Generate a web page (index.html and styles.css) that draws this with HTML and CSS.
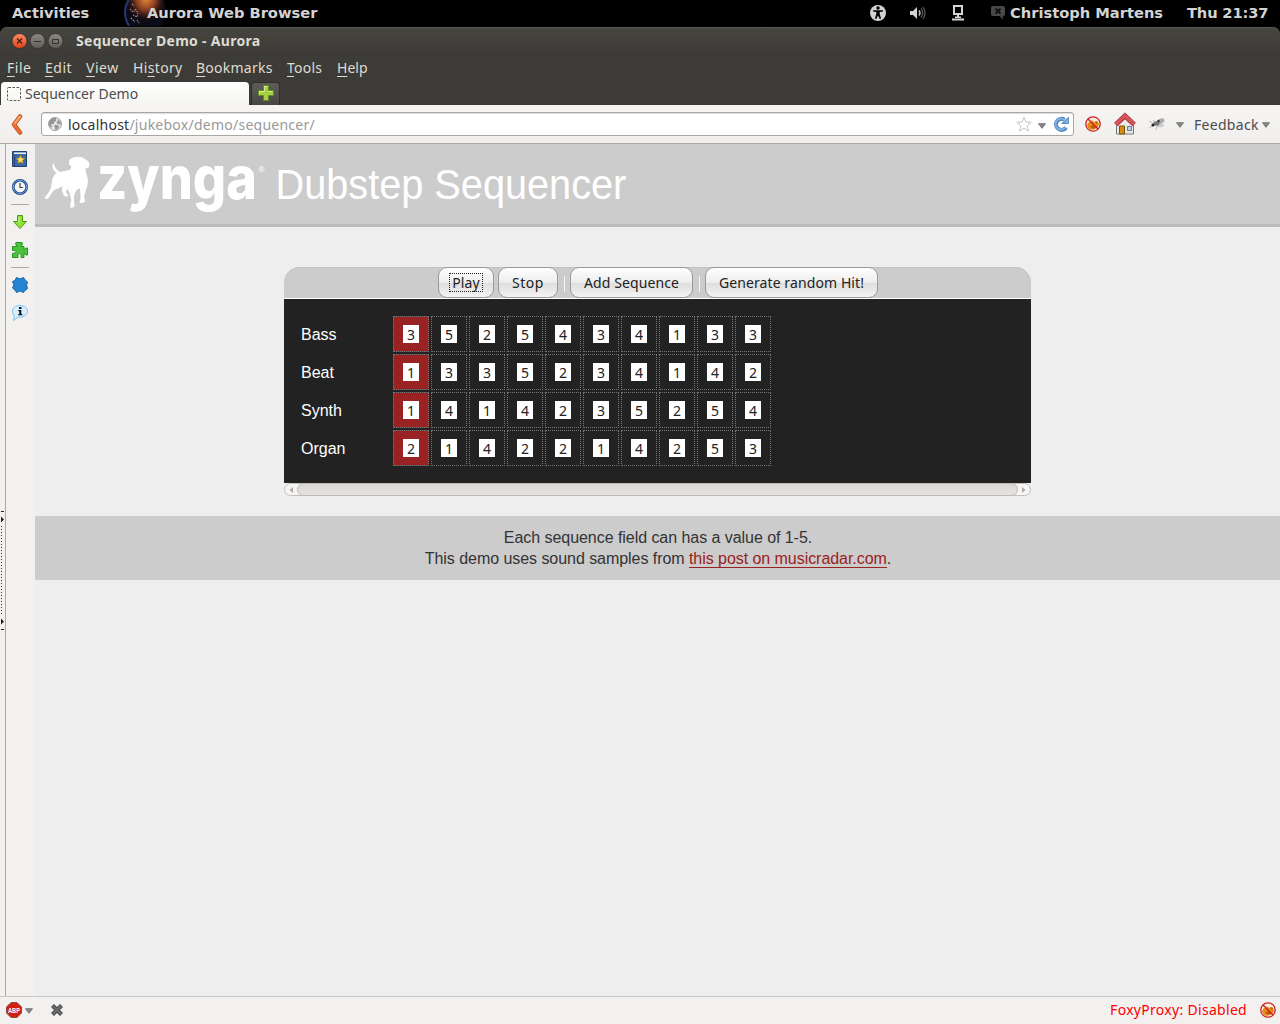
FILE: index.html
```html
<!DOCTYPE html>
<html lang="en">
<head>
<meta charset="utf-8">
<title>Sequencer Demo</title>
<link rel="stylesheet" href="styles.css">
</head>
<body>
<svg class="defs" width="0" height="0">
  <defs>
    <symbol id="fox" viewBox="0 0 16 16">
      <circle cx="8" cy="8" r="7.2" fill="#fbeee0"/>
      <path d="M4 6l2 0 1-2 2 2 3-1 2 3-1 3-3 2-4 1-3-2-1-3z" fill="#e88a18"/>
      <path d="M5 11l3-2 3 2-2 2zM10 5l3 1-1 2z" fill="#b85a08"/>
      <circle cx="8" cy="8" r="7.2" fill="none" stroke="#cc2020" stroke-width="1.3"/>
      <path d="M3 3l10 10" stroke="#cc2020" stroke-width="1.4"/>
    </symbol>
    <symbol id="caret" viewBox="0 0 8 6"><path d="M.5.7h7L4 5.3z" fill="#888" stroke="#666" stroke-width=".8"/></symbol>
  </defs>
</svg>

<div class="topbar">
  <span class="activities">Activities</span>
  <svg class="aurora-icon" width="44" height="26" viewBox="0 0 44 26">
    <defs>
      <radialGradient id="glow" cx=".5" cy=".3" r=".55"><stop offset="0" stop-color="#e48a35"/><stop offset=".45" stop-color="#8a3c20"/><stop offset="1" stop-color="#000" stop-opacity="0"/></radialGradient>
    </defs>
    <circle cx="22" cy="12" r="21" fill="#0a0b18"/>
    <ellipse cx="23" cy="8" rx="20" ry="23" fill="url(#glow)"/>
    <path d="M6 -1Q-2 12 6 26" fill="none" stroke="#26386e" stroke-width="2"/>
    <path d="M9 4l2 2M7 9l3 3 3-2M10 15l4 2 1-4M8 18l4 4M14 20l2 3M12 9l3 4" fill="none" stroke="#a58480" stroke-width="1.2" stroke-dasharray="1.5 1"/>
  </svg>
  <span class="app-name">Aurora Web Browser</span>
  <div class="tray">
    <svg width="16" height="16" viewBox="0 0 16 16"><circle cx="8" cy="8" r="8" fill="#d3d3d3"/><circle cx="8" cy="3" r="1.7"/><path d="M3 5.2l10 0v1.4l-3.3.5v2l1.4 4.5-1.4.4L8 10.5l-1.700 3.5-1.400-.4 1.400-4.500v-2L3 6.600z"/></svg>
    <svg width="16" height="14" viewBox="0 0 16 14"><path d="M0 5h3l4-4v12l-4-4H0z" fill="#d3d3d3"/><path d="M9 4.500q2 2.500 0 5" fill="none" stroke="#bbb" stroke-width="1.500"/><path d="M11 2.500q3.500 4.500 0 9M13 1q4 6 0 12" fill="none" stroke="#555" stroke-width="1.300"/></svg>
    <svg width="12" height="16" viewBox="0 0 12 16"><path d="M2 1h8v8H2z" fill="none" stroke="#d3d3d3" stroke-width="2"/><path d="M5 9h2v2.500h2V13H3v-1.500h2zM0 13.500h12v2H0z" fill="#d3d3d3"/></svg>
    <svg class="chat" width="14" height="14" viewBox="0 0 14 14"><path d="M2 0h10q2 0 2 2v6q0 2-2 2v3.500L8.500 10H2Q0 10 0 8V2Q0 0 2 0z" fill="#484848"/><path d="M4.500 2.700l5 5m0-5l-5 5" stroke="#0a0a0a" stroke-width="1.700"/></svg>
    <span class="user">Christoph Martens</span>
    <span class="clock">Thu 21:37</span>
  </div>
</div>

<div class="window">
  <div class="titlebar">
    <svg class="winbtns" width="54" height="18" viewBox="0 0 54 18">
      <defs><linearGradient id="r" x2="0" y2="1"><stop stop-color="#f78b64"/><stop offset="1" stop-color="#dc4417"/></linearGradient><linearGradient id="g" x2="0" y2="1"><stop stop-color="#8c8a82"/><stop offset="1" stop-color="#5e5d57"/></linearGradient></defs>
      <circle cx="8.500" cy="9" r="7.500" fill="url(#r)" stroke="#2e2d2a" stroke-width=".8"/><path d="M6 6.500l5 5m0-5l-5 5" stroke="#4a1a0c" stroke-width="1.200"/>
      <circle cx="26.500" cy="9" r="7.500" fill="url(#g)" stroke="#2e2d2a" stroke-width=".8"/><path d="M23 9.500h7" stroke="#33322e"/>
      <circle cx="44.500" cy="9" r="7.500" fill="url(#g)" stroke="#2e2d2a" stroke-width=".8"/><path d="M41.500 7.500h6v4h-6z" fill="none" stroke="#33322e"/>
    </svg>
    <span class="title">Sequencer Demo - Aurora</span>
  </div>
  <div class="menubar">
    <span class="m-file"><u>F</u>ile</span><span class="m-edit"><u>E</u>dit</span><span class="m-view"><u>V</u>iew</span><span class="m-history">Hi<u>s</u>tory</span><span class="m-book"><u>B</u>ookmarks</span><span class="m-tools"><u>T</u>ools</span><span class="m-help"><u>H</u>elp</span>
  </div>
  <div class="tabs">
    <div class="tab">
      <svg width="14" height="14" viewBox="0 0 14 14"><rect x=".5" y=".5" width="13" height="13" rx="1" fill="none" stroke="#555" stroke-dasharray="2.500 1.500"/></svg>
      <span>Sequencer Demo</span>
    </div>
    <div class="newtab"><svg width="16" height="16" viewBox="0 0 16 16"><path d="M5.500.5h5v5h5v5h-5v5h-5v-5h-5v-5h5z" fill="#a8cf45" stroke="#5f8f1d"/><path d="M6.500 6.500v-5h3M1.500 9v-2.500h5M10 6.500h4.500" fill="none" stroke="#d7eb8c"/></svg></div>
  </div>
  <div class="navbar">
    <svg class="back" width="12" height="21" viewBox="0 0 12 21"><path d="M9 2.500L3 10.500l6 8" fill="none" stroke="#c8511f" stroke-width="4.500" stroke-linecap="round" stroke-linejoin="round"/><path d="M9 2.500L3 10.500" fill="none" stroke="#f2a468" stroke-width="2.500" stroke-linecap="round"/><path d="M3 10.500l6 8" fill="none" stroke="#ee7035" stroke-width="2.500" stroke-linecap="round"/></svg>
    <div class="urlbar">
      <svg width="14" height="14" viewBox="0 0 14 14"><circle cx="7" cy="7" r="6.500" fill="#e2e2e2" stroke="#a2a2a2"/><path d="M1 4l3-3 4 0 0 3-2 1 0 2-3 0 1 2-1 2-2-3zM9 2l3 2 1.500 4-2-1-2 0-1-2 1.500-1zM7 8l3 0 1 2-2 3-2-.5 0-2-1-1z" fill="#979797"/></svg>
      <span class="url"><b>localhost</b>/jukebox/demo/sequencer/</span>
      <svg class="star" width="16" height="16" viewBox="0 0 16 16"><path d="M8 1l2 5 5.200.4-4 3.300 1.300 5.300L8 12.200 3.500 15l1.300-5.300-4-3.300L6 6z" fill="#fff" stroke="#c6c6c6"/></svg>
      <svg class="uc" width="8" height="6"><use href="#caret"/></svg>
      <svg width="16" height="16" viewBox="0 0 16 16"><path d="M13 11.500A5.500 5.500 0 1 1 11.500 3.800" fill="none" stroke="#4b82b8" stroke-width="4"/><path d="M15.800.5v7.500H8z" fill="#4b82b8"/><path d="M12.600 11A5.500 5.500 0 1 1 11.500 3.800" fill="none" stroke="#7fb0df" stroke-width="2.200"/><path d="M15 2.500v4.700h-5z" fill="#7fb0df"/></svg>
    </div>
    <svg class="foxnav" width="16" height="16"><use href="#fox"/></svg>
    <svg class="home" width="22" height="24" viewBox="0 0 22 24"><path d="M2.500 11L11 4l8.500 7v11h-17z" fill="#e9e9e6" stroke="#777"/><path d="M5.500 14h5v8h-5z" fill="#d98c12" stroke="#7a5210"/><path d="M13.500 14.500h4v4h-4z" fill="#bcd2ea" stroke="#6c7a88"/><path d="M1.800 12.500L11 4l9.200 8.500" fill="none" stroke="#a93036" stroke-width="5"/><path d="M1.800 12.200L11 3.700l9.200 8.500" fill="none" stroke="#d65557" stroke-width="3.400"/></svg>
    <svg class="fly" width="18" height="14" viewBox="0 0 18 14"><path d="M1 4l5 3M1 11l5-3M8 13l1-4M16 8l-5-1M5 3l3 3" stroke="#aaa" stroke-width=".8"/><ellipse cx="12.500" cy="4.500" rx="4" ry="2.500" transform="rotate(-25 12 4)" fill="#aaa"/><ellipse cx="12" cy="8.500" rx="3.500" ry="1.800" fill="#ccc"/><ellipse cx="8.500" cy="6.500" rx="3" ry="2.200" fill="#777"/><circle cx="5" cy="8" r="1.600" fill="#222"/><circle cx="10.500" cy="4" r="1.200" fill="#333"/></svg>
    <svg class="c2" width="8" height="6"><use href="#caret"/></svg>
    <span class="feedback">Feedback</span>
    <svg class="c3" width="8" height="6"><use href="#caret"/></svg>
  </div>

  <div class="main">
    <div class="splitter">
      <svg width="4" height="120" viewBox="0 0 4 120"><path d="M1 1.500h3M1 119.500h3" stroke="#222"/><path d="M1 6.500l3 3-3 3zM1 108.500l3 3-3 3z" fill="#222"/><path d="M1.500 16v88" stroke="#333" stroke-dasharray="1 2"/></svg>
    </div>
    <div class="sidebar">
      <svg width="16" height="16" viewBox="0 0 16 16"><path d="M.5.500h14v15H.5z" fill="#3d68a8" stroke="#1f3f70"/><path d="M2 1.500h12V3H2z" fill="#eee"/><path d="M2.500 3v12" stroke="#24477d"/><path d="M8.500 4.500l1.300 2.600 2.900.3-2.100 2 .5 2.900-2.600-1.400-2.600 1.400.5-2.900-2.100-2 2.900-.3z" fill="#fae15c" stroke="#b8860b" stroke-width=".7"/></svg>
      <svg class="gap12" width="16" height="16" viewBox="0 0 16 16"><circle cx="8" cy="8" r="6.700" fill="#f4f5f7" stroke="#204a87" stroke-width="2.600"/><circle cx="8" cy="8" r="6.700" fill="none" stroke="#6f9fd8" stroke-width="1"/><path d="M8 4v4.500h3" fill="none" stroke="#444" stroke-width="1.200"/></svg>
      <hr class="h1r">
      <svg class="down" width="14" height="14" viewBox="0 0 14 14"><path d="M4.500.5h5v6h4L7 13.500.5 6.500h4z" fill="#8fe03c" stroke="#4e9a06"/><path d="M6 2v6" stroke="#c6f58a"/></svg>
      <svg class="puz" width="16" height="16" viewBox="0 0 16 16"><path d="M.5 4.500h4.500Q2.500 1 4 .5h6q1.500.5-1 4H12v3q1.500 0 2-1.500l1.500 0v7l-1.500 0q-.5-1.500-2-1.500v4H9q1-4-1.500-4t-1.500 4H.5v-4q3.500 0 3.500-2t-3.500-1z" fill="#4cc23e" stroke="#259620"/></svg>
      <hr class="h2r">
      <svg class="blue" width="16" height="16" viewBox="0 0 16 16"><path d="M4.500.5L8 2l3.500-1.500 2 3 2 1.500L14.500 8l1 3.500-2.500 2-1.500 2L8 14l-3.500 1.500-1.500-2.500-2.500-2L2 8 .5 4.500l2.500-1z" fill="#2584d3" stroke="#1b62a4"/></svg>
      <svg class="info" width="16" height="16" viewBox="0 0 16 16"><path d="M8 .5c4 0 7.500 2.300 7.500 5.700S12 12 8 12l-2 0-4.500 3.500.8-5Q.5 9 .5 6.200C.5 2.800 4 .5 8 .5z" fill="#d6efff" stroke="#74c2f0"/><path d="M7 2h2.500v2H7zM6.300 5h3v4h1v1.200h-4V9h1V6.200h-1z" fill="#111"/></svg>
    </div>

    <div class="page">
      <header>
        <svg class="logo" width="220" height="60" viewBox="0 0 220 60">
          <path transform="translate(-5 -6) scale(.3333)" d="M42 40Q43 57 60 66Q76 65 92 58Q95 50 92 46Q86 46 87 40L88 30Q98 20 115 20Q130 20 135 28Q149 34 148 46Q146 58 136 55Q136 64 140 75Q146 90 142 108Q136 125 132 140L135 152Q134 160 119 159Q119 152 122 145L120 115Q110 118 105 128Q101 138 102 150L104 168Q100 175 91 173L91 163L94 150L88 127Q84 118 80 117Q77 125 79 130L85 134Q85 140 77 140Q68 136 70 130Q64 124 67 109Q58 114 44 119Q36 125 25 145Q19 150 14 144L17 138Q30 126 34 108Q36 95 37 86Q40 74 50 68Q36 60 38 46Q39 40 42 40Z" fill="#fff"/>
          <text class="brand" x="52" y="43" textLength="160" lengthAdjust="spacingAndGlyphs">zynga</text>
          <text class="reg" x="213" y="16">®</text>
        </svg>
        <h1>Dubstep Sequencer</h1>
      </header>

      <div class="panel">
        <div class="toolbar">
          <button class="b1"><span>Play</span></button><button class="b2">Stop</button><i></i><button class="b3">Add Sequence</button><i></i><button class="b4">Generate random Hit!</button>
        </div>
        <div class="seq">
          <div class="row"><label>Bass</label><div class="on"><b>3</b></div><div><b>5</b></div><div><b>2</b></div><div><b>5</b></div><div><b>4</b></div><div><b>3</b></div><div><b>4</b></div><div><b>1</b></div><div><b>3</b></div><div><b>3</b></div></div>
          <div class="row"><label>Beat</label><div class="on"><b>1</b></div><div><b>3</b></div><div><b>3</b></div><div><b>5</b></div><div><b>2</b></div><div><b>3</b></div><div><b>4</b></div><div><b>1</b></div><div><b>4</b></div><div><b>2</b></div></div>
          <div class="row"><label>Synth</label><div class="on"><b>1</b></div><div><b>4</b></div><div><b>1</b></div><div><b>4</b></div><div><b>2</b></div><div><b>3</b></div><div><b>5</b></div><div><b>2</b></div><div><b>5</b></div><div><b>4</b></div></div>
          <div class="row"><label>Organ</label><div class="on"><b>2</b></div><div><b>1</b></div><div><b>4</b></div><div><b>2</b></div><div><b>2</b></div><div><b>1</b></div><div><b>4</b></div><div><b>2</b></div><div><b>5</b></div><div><b>3</b></div></div>
        </div>
        <div class="scroll">
          <svg width="5" height="6" viewBox="0 0 5 6"><path d="M4 0v6L.5 3z" fill="#aaa"/></svg>
          <div class="thumb"></div>
          <svg width="5" height="6" viewBox="0 0 5 6"><path d="M1 0v6l3.500-3z" fill="#aaa"/></svg>
        </div>
      </div>

      <footer>
        <p class="f1">Each sequence field can has a value of 1-5.</p>
        <p class="f2">This demo uses sound samples from <a>this post on musicradar.com</a>.</p>
      </footer>
    </div>
  </div>

  <div class="status">
    <svg class="adblock" width="16" height="16" viewBox="0 0 16 16"><path d="M5 .5h6L15.500 5v6L11 15.500H5L.5 11V5z" fill="#cf2010" stroke="#8f4a44"/><text class="abp" x="2" y="11" textLength="12" lengthAdjust="spacingAndGlyphs">ABP</text></svg>
    <svg class="s2" width="8" height="6"><use href="#caret"/></svg>
    <svg class="s3" width="12" height="12" viewBox="0 0 12 12"><path d="M1.500 1.500l9 9M10.500 1.500l-9 9" stroke="#444" stroke-width="4.200"/><path d="M1.800 1.800l8.400 8.400M10.200 1.800l-8.400 8.400" stroke="#6a6a6a" stroke-width="2.400"/></svg>
    <span class="proxy">FoxyProxy: Disabled</span>
    <svg width="16" height="16"><use href="#fox"/></svg>
  </div>
</div>
</body>
</html>
```
FILE: styles.css
```css
* { box-sizing: border-box; }
body { margin: 0; width: 1280px; height: 1024px; overflow: hidden; background: #000; font: 14px/20px "Noto Sans", sans-serif; white-space: nowrap; }
svg { display: block; flex: none; }
.defs { position: absolute; }
.topbar { height: 27px; display: flex; align-items: center; padding: 0 12px 1px; background: #000; color: #d3d3d3; font: bold 14.67px/26px "DejaVu Sans", sans-serif; }
.topbar > span, .tray > span { line-height: 24px; }
.activities { width: 111px; }
.aurora-icon { margin-right: -20px; }
.app-name { position: relative; }
.tray { margin-left: auto; display: flex; align-items: center; }
.tray svg { margin-right: 24px; }
.tray svg:nth-of-type(2) { margin-right: 26px; }
.tray svg:nth-of-type(3) { margin-right: 27px; }
.tray svg.chat { margin-right: 5px; }
.user { width: 177px; }
.clock { width: 81px; letter-spacing: -.15px; }

.window { height: 997px; display: flex; flex-direction: column; background: linear-gradient(#464540, #3c3b37 28px); border-radius: 7px 7px 0 0; border-top: 1px solid #5b5a53; }
.titlebar { height: 27px; display: flex; align-items: center; padding: 0 0 1px 11px; color: #dfdbd2; font-weight: bold; letter-spacing: .3px; }
.winbtns { margin-right: 11px; }
.menubar { height: 26px; display: flex; gap: 14px; padding: 2px 7px; color: #dfdbd2; line-height: 22px; }
.menubar u { text-underline-offset: 3px; text-decoration-thickness: 1px; text-decoration-skip-ink: none; }
.m-file { width: 24px; letter-spacing: .5px; }
.m-edit { width: 27px; letter-spacing: .5px; }
.m-view { width: 33px; letter-spacing: .5px; }
.m-history { width: 49px; letter-spacing: .35px; }
.m-book { width: 77px; letter-spacing: .25px; }
.m-tools { width: 36px; letter-spacing: .25px; }
.tabs { height: 24px; display: flex; padding-top: 1px; }
.tab { width: 248px; margin-left: 1px; display: flex; align-items: center; gap: 4px; padding-left: 6px; background: linear-gradient(#fff, #f5f4f3); border-radius: 4px 4px 0 0; color: #4c4c4c; }
.newtab { width: 29px; margin-left: 2px; padding: 2px 0 0 6px; background: linear-gradient(#5d5c57, #474642); border: 1px solid #2f2e2b; border-bottom: 0; border-radius: 4px 4px 0 0; }
.navbar { height: 39px; display: flex; align-items: center; padding-left: 11px; background: linear-gradient(#f6f5f4, #f0efee); border-bottom: 1px solid #aaa9a7; color: #4c4c4c; }
.urlbar { width: 1033px; height: 24px; margin-left: 18px; display: flex; align-items: center; padding: 0 4px 0 6px; background: #fff; border: 1px solid #aaa6a1; border-radius: 3px; box-shadow: inset 0 1px 1px #ddd; color: #999; }
.url { margin-left: 6px; letter-spacing: .25px; padding-top: 1px; }
.url b { font-weight: normal; color: #333; }
.star { margin-left: auto; }
.uc { margin: 3px 7px 0 6px; }
.foxnav { margin-left: 11px; }
.home { margin-left: 13px; }
.fly { margin-left: 12px; }
.c2 { margin: 2px 10px 0 10px; }
.feedback { width: 65px; letter-spacing: .3px; padding-top: 1px; }
.c3 { margin: 2px 0 0 3px; }

.main { height: 852px; display: flex; background: #f2f1f0; }
.splitter { width: 6px; border-right: 1px solid #aaa9a7; padding-top: 366px; }
.sidebar { width: 29px; display: flex; flex-direction: column; align-items: center; padding: 7px 1px 0 0; }
.sidebar hr { width: 18px; height: 1px; border: 0; background: #aaa9a7; }
.gap12 { margin-top: 12px; }
.h1r { margin: 9px 0 0; }
.down { margin-top: 10px; }
.puz { margin-top: 13px; }
.h2r { margin: 9px 0 0; }
.blue { margin-top: 9px; }
.info { margin-top: 12px; }
.page { flex: 1; background: #eee; font-family: "Liberation Sans", sans-serif; font-size: 16px; }
header { height: 83px; display: flex; background: #ccc; border-bottom: 3px solid #bbb; padding: 12px 0 0 10px; color: #fff; }
.logo { overflow: visible; margin-right: 10px; }
.brand { font: 800 60px Inter, sans-serif; fill: #fff; }
.reg { font: 8px "Open Sans", sans-serif; fill: #fff; }
h1 { margin: 0; font: normal 42px/58px "Liberation Sans", sans-serif; transform: translateX(.5px) scaleX(.945); transform-origin: 0 0; }
.panel { width: 747px; margin: 40px 0 0 249px; }
.toolbar { height: 32px; display: flex; justify-content: flex-start; padding-left: 154px; background: #ccc; border-bottom: 1px solid #fff; border-radius: 16px 16px 0 0; box-shadow: inset 0 1px 0 #c2c2c2; }
button { height: 31px; padding: 0; border: 1px solid #999; border-radius: 9px; background: linear-gradient(#fff, #ededed 50%, #dedede 52%, #f4f4f4); font: 14px/20px "Noto Sans", sans-serif; letter-spacing: .1px; color: #222; white-space: nowrap; }
.b1 { width: 56px; margin-right: 4px; }
.b1 span { display: block; width: 34px; margin: 0 auto; height: 19px; line-height: 17px; border: 1px dotted #222; }
.b2 { width: 60px; letter-spacing: .5px; }
.b3 { width: 123px; }
.b4 { width: 173px; }
.toolbar i { width: 1px; height: 16px; margin: 9px 5px 0 6px; background: #f5f5f5; }
.seq { height: 184px; background: #222; color: #fff; padding: 17px; }
.row { height: 38px; display: flex; gap: 2px; }
.row label { width: 90px; line-height: 37px; }
.row div { width: 36px; height: 36px; border: 1px dotted #777; padding: 8px 0 0 9px; }
.row .on { background: #992222; }
.row b { display: block; width: 16px; height: 18px; background: #fff; color: #222; font: 14px/19px "Noto Sans", sans-serif; text-align: center; }
.scroll { height: 13px; display: flex; align-items: center; justify-content: space-between; padding: 0 4px; background: #f6f5f4; border: 1px solid #c2bfbc; border-radius: 7px; }
.thumb { width: 721px; height: 13px; background: linear-gradient(#dad7d4, #e6e4e2); border: 1px solid #bdbab7; border-radius: 7px; }
footer { height: 64px; margin-top: 20px; padding: 11px 0 0 1px; background: #ccc; color: #333; text-align: center; line-height: 21px; letter-spacing: -.05px; }
footer p { margin: 0; }
footer a { color: #992222; border-bottom: 1px solid #992222; }
.status { height: 28px; display: flex; align-items: center; padding: 0 4px 1px 6px; background: #f2f1f0; border-top: 1px solid #c9c8c6; }
.adblock { overflow: visible; }
.abp { font: bold 8px "Liberation Sans", sans-serif; fill: #fff; }
.s2 { margin: 2px 0 0 3px; }
.s3 { margin-left: 18px; }
.proxy { margin-left: auto; margin-right: 13px; color: #f00; letter-spacing: .3px; }
```
